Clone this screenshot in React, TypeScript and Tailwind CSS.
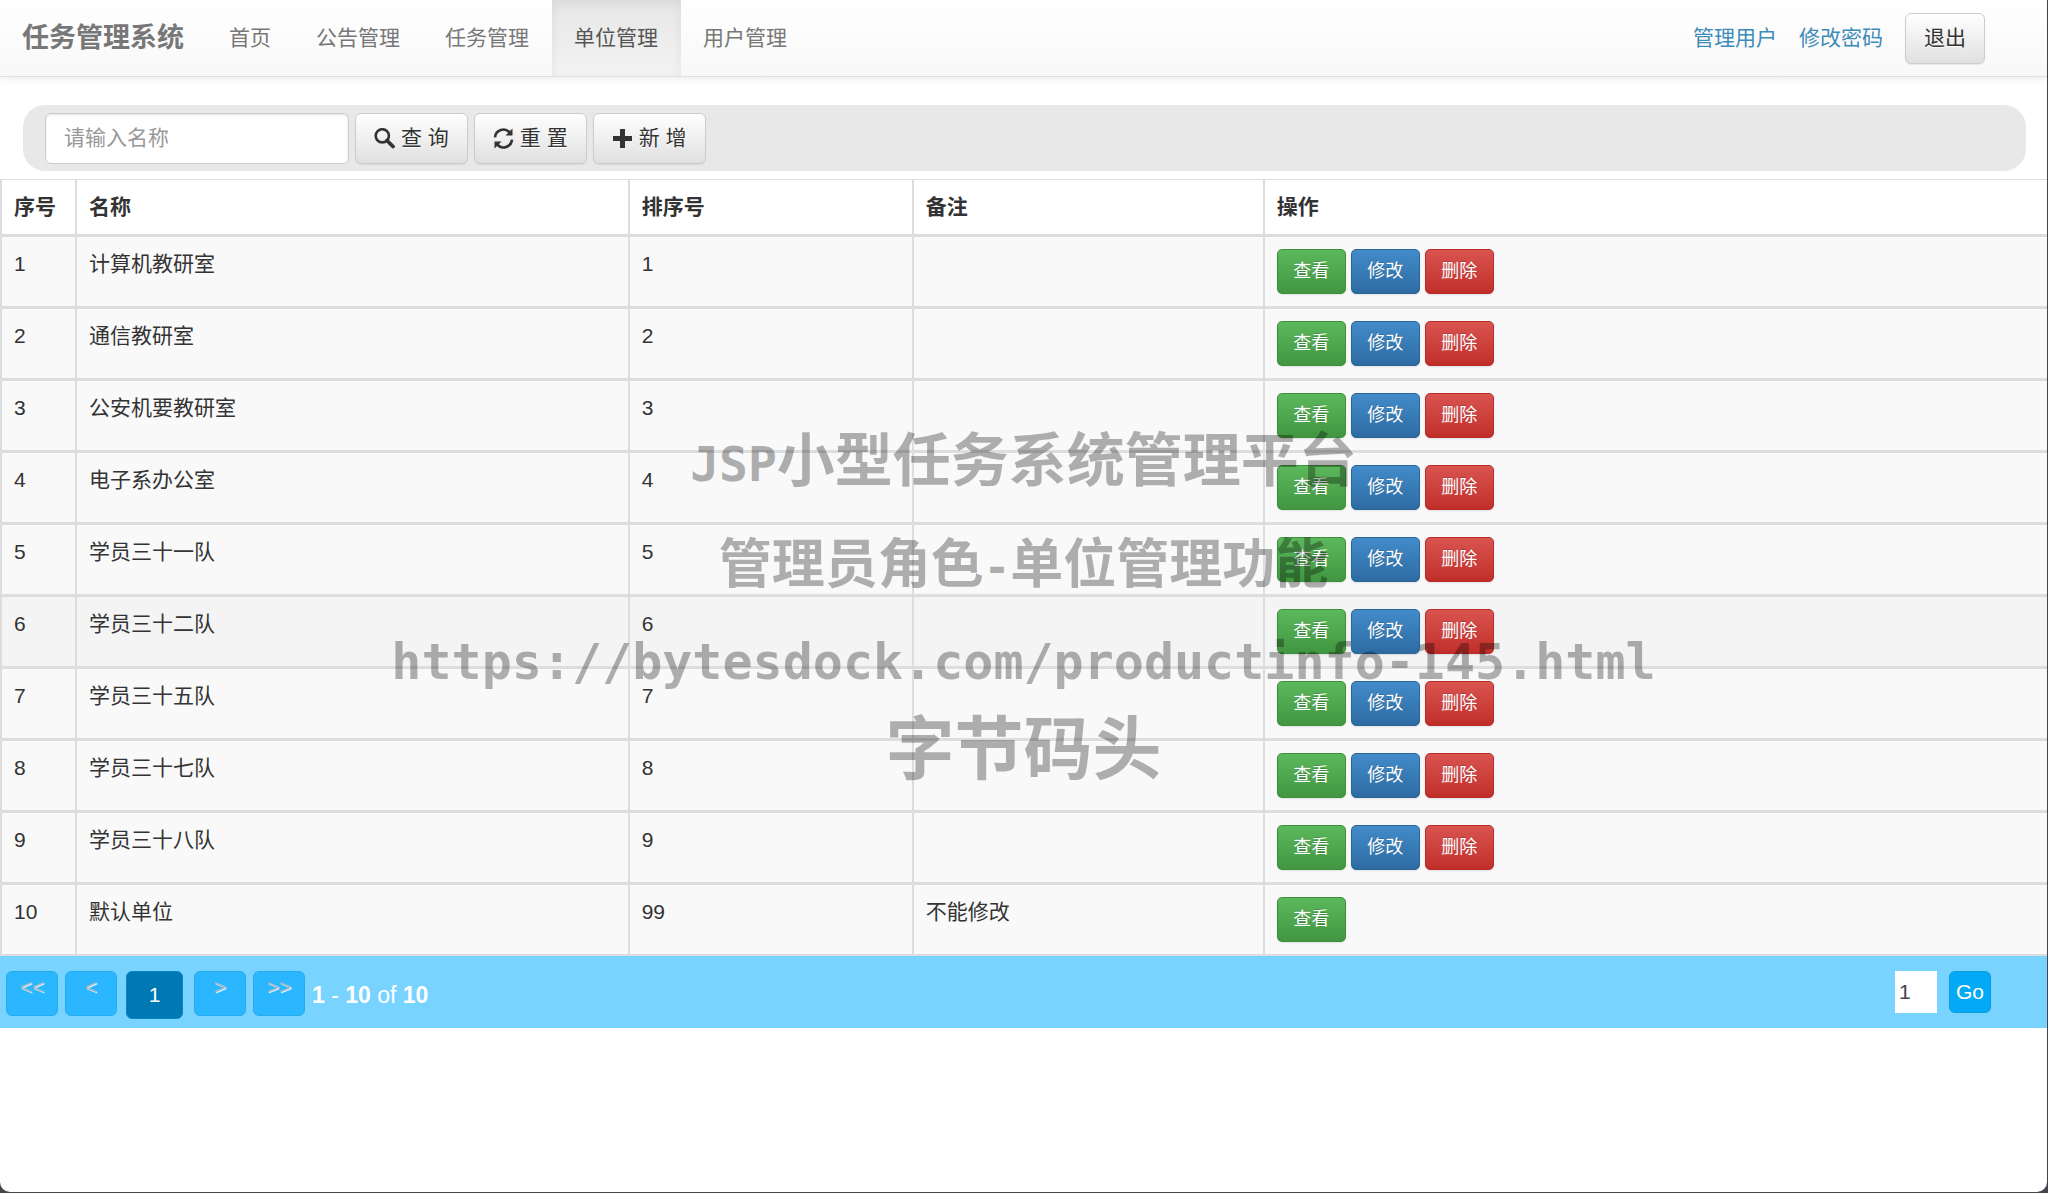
import React from 'react';

interface Unit {
  id: number;
  name: string;
  sort: number;
  remark?: string;
  locked?: boolean;
  hovered?: boolean;
}

const units: Unit[] = [
  { id: 1, name: '计算机教研室', sort: 1 },
  { id: 2, name: '通信教研室', sort: 2 },
  { id: 3, name: '公安机要教研室', sort: 3 },
  { id: 4, name: '电子系办公室', sort: 4 },
  { id: 5, name: '学员三十一队', sort: 5 },
  { id: 6, name: '学员三十二队', sort: 6, hovered: true },
  { id: 7, name: '学员三十五队', sort: 7 },
  { id: 8, name: '学员三十七队', sort: 8 },
  { id: 9, name: '学员三十八队', sort: 9 },
  { id: 10, name: '默认单位', sort: 99, remark: '不能修改', locked: true },
];

const navItems = ['首页', '公告管理', '任务管理', '单位管理', '用户管理'];

const SearchIcon: React.FC = () => (
  <svg viewBox="0 0 21 21" className="size-[21px]" fill="none" stroke="currentColor">
    <circle cx="8.3" cy="7.8" r="6.6" strokeWidth="2.6" />
    <path d="M13 12.5 L19 18.5" strokeWidth="3.8" strokeLinecap="round" />
  </svg>
);

const RefreshIcon: React.FC = () => (
  <svg viewBox="0 0 21 21" className="size-[21px]" fill="none" stroke="currentColor">
    <path d="M2 9.3 A8.4 8.4 0 0 1 16.8 4.6" strokeWidth="2.6" />
    <path d="M19 11.7 A8.4 8.4 0 0 1 4.2 16.4" strokeWidth="2.6" />
    <path d="M19.5 0.5 V7.5 H12.5 Z M1.5 20.5 V13.5 H8.5 Z" fill="currentColor" stroke="none" />
  </svg>
);

const PlusIcon: React.FC = () => (
  <svg viewBox="0 0 21 21" className="size-[21px]" fill="currentColor">
    <path d="M8 1 H13 V8 H20 V13 H13 V20 H8 V13 H1 V8 H8 Z" />
  </svg>
);

const DefaultButton: React.FC<{ children: React.ReactNode }> = ({ children }) => (
  <button
    type="button"
    className="flex h-[51px] items-center gap-1.5 rounded-md border border-[#ccc] bg-linear-to-b from-white to-[#e0e0e0] px-[18px] whitespace-nowrap shadow-[inset_0_1px_0_rgba(255,255,255,.15),0_1px_1px_rgba(0,0,0,.075)] [text-shadow:0_1px_0_#fff]"
  >
    {children}
  </button>
);

const actionStyles = {
  view: 'border-[#3e8f3e] from-[#5cb85c] to-[#419641]',
  edit: 'border-[#2b669a] from-[#428bca] to-[#2d6ca2]',
  remove: 'border-[#b92c28] from-[#d9534f] to-[#c12e2a]',
};

const ActionButton: React.FC<{ kind: keyof typeof actionStyles; label: string }> = ({ kind, label }) => (
  <button
    type="button"
    className={`h-[45px] w-[69px] rounded-[5px] border bg-linear-to-b text-lg leading-[27px] text-white shadow-[0_1px_2px_rgba(0,0,0,.1)] [text-shadow:0_-1px_0_rgba(0,0,0,.2)] ${actionStyles[kind]}`}
  >
    {label}
  </button>
);

const PagerButton: React.FC<{ children: React.ReactNode }> = ({ children }) => (
  <button
    type="button"
    disabled
    className="flex h-[45px] w-[52px] justify-center rounded-md border border-[#28abec] bg-[#2ab7ff] leading-[30px] text-[#a9b9c2] [text-shadow:1px_1px_0_#d5f0ff]"
  >
    {children}
  </button>
);

const Navbar: React.FC = () => (
  <nav className="flex h-[77px] items-center justify-between border-b border-[#dfe1e1] bg-linear-to-b from-white to-[#f8f8f8] pr-[62px] shadow-[0_2px_8px_rgba(0,0,0,.08)]">
    <div className="flex h-full items-center">
      <a href="#" className="pr-[23px] pl-[22px] text-[27px] font-bold text-[#777]">
        任务管理系统
      </a>
      {navItems.map((item) => (
        <a
          key={item}
          href="#"
          className={
            item === '单位管理'
              ? 'flex h-full items-center bg-linear-to-b from-[#e6e6e6] to-[#f3f3f3] pr-[23px] pl-[22px] text-[#555] shadow-[inset_0_3px_12px_rgba(0,0,0,.06)]'
              : 'flex h-full items-center pr-[23px] pl-[22px] text-[#777]'
          }
        >
          {item}
        </a>
      ))}
    </div>
    <div className="flex items-center gap-[22px] text-[#3d8bb8]">
      <a href="#">管理用户</a>
      <a href="#">修改密码</a>
      <div className="text-[#333]">
        <DefaultButton>退出</DefaultButton>
      </div>
    </div>
  </nav>
);

const SearchBar: React.FC = () => (
  <form className="mt-7 mr-[21px] ml-[23px] flex h-[66px] items-center gap-1.5 rounded-[22px] bg-[#e8e8e8] px-[22px]">
    <input
      type="text"
      aria-label="名称"
      placeholder="请输入名称"
      className="h-[51px] w-[304px] rounded-md border border-[#ccc] bg-white px-[18px] shadow-[inset_0_1px_2px_rgba(0,0,0,.1)] placeholder:text-[#999]"
    />
    <DefaultButton>
      <SearchIcon />
      查 询
    </DefaultButton>
    <DefaultButton>
      <RefreshIcon />
      重 置
    </DefaultButton>
    <DefaultButton>
      <PlusIcon />
      新 增
    </DefaultButton>
  </form>
);

const UnitTable: React.FC = () => (
  <table className="mt-2 w-full table-fixed border-separate border-spacing-0 border-t border-[#ddd] text-left leading-[30px]">
    <thead>
      <tr className="h-[57px] *:border-b-3 *:border-l-2 *:border-[#ddd] *:px-3">
        <th className="w-[75px]">序号</th>
        <th className="w-[27%]">名称</th>
        <th className="w-[284px]">排序号</th>
        <th className="w-[351px]">备注</th>
        <th>操作</th>
      </tr>
    </thead>
    <tbody>
      {units.map((unit) => (
        <tr
          key={unit.id}
          className={`*:border-b-3 *:border-l-2 *:border-[#ddd] *:px-3 *:py-3 *:align-top last:*:border-b-2 ${
            unit.hovered ? 'bg-[#f4f4f4]' : 'bg-[#f9f9f9]'
          }`}
        >
          <td>{unit.id}</td>
          <td>{unit.name}</td>
          <td>{unit.sort}</td>
          <td>{unit.remark}</td>
          <td>
            <div className="flex gap-[5px]">
              <ActionButton kind="view" label="查看" />
              {!unit.locked && <ActionButton kind="edit" label="修改" />}
              {!unit.locked && <ActionButton kind="remove" label="删除" />}
            </div>
          </td>
        </tr>
      ))}
    </tbody>
  </table>
);

const Pager: React.FC = () => (
  <div className="flex h-[72px] items-start justify-between bg-[#78d3ff] pt-[15px] pr-14 pl-1.5">
    <div className="flex gap-[7px]">
      <PagerButton>&lt;&lt;</PagerButton>
      <PagerButton>&lt;</PagerButton>
      <button
        type="button"
        className="mr-1 ml-0.5 h-12 w-[57px] rounded-md border border-[#0a86c4] bg-[#0078b3] text-white"
      >
        1
      </button>
      <PagerButton>&gt;</PagerButton>
      <PagerButton>&gt;&gt;</PagerButton>
      <span className="text-[23px] leading-[48px] text-white">
        <b>1</b> - <b>10</b> of <b>10</b>
      </span>
    </div>
    <div className="flex gap-3">
      <input type="text" aria-label="页码" defaultValue="1" className="size-[42px] bg-white px-1 text-[#444]" />
      <button type="button" className="size-[42px] rounded-md border border-[#0b9be0] bg-[#03a9f4] text-white">
        Go
      </button>
    </div>
  </div>
);

const Watermark: React.FC = () => (
  <div className="pointer-events-none absolute inset-x-0 top-[409px] flex flex-col items-center font-['DejaVu_Sans_Mono','Noto_Sans_CJK_SC',monospace] font-bold whitespace-nowrap text-black opacity-30">
    <p className="text-[58px] leading-[104px]">
      <span className="text-5xl">JSP</span>小型任务系统管理平台
    </p>
    <p className="text-[53px] leading-[104px]">
      管理员角色<span className="text-[44px]">-</span>单位管理功能
    </p>
    <p className="text-[50px] leading-[84px]">https://bytesdock.com/productinfo-145.html</p>
    <p className="text-[69px] leading-[92px]">字节码头</p>
  </div>
);

export default function App() {
  return (
    <div className="flex min-h-screen bg-[#43464d] pr-px pb-px font-['Liberation_Sans','Noto_Sans_CJK_SC',sans-serif] text-[21px] text-[#333]">
      <main className="relative min-w-0 flex-1 rounded-b-[10px] bg-white">
        <Navbar />
        <SearchBar />
        <UnitTable />
        <Pager />
        <Watermark />
      </main>
    </div>
  );
}
